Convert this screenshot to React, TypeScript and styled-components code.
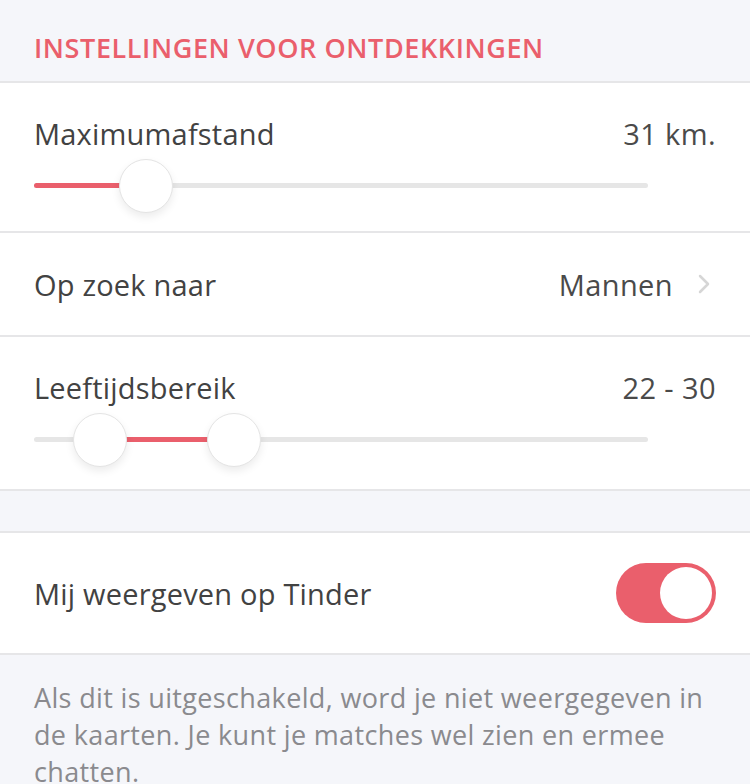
import React from "react";
import styled, { createGlobalStyle } from "styled-components";

const Global = createGlobalStyle`
  html, body { margin: 0; padding: 0; background: #f5f6fa; }
  body { font-family: "Open Sans", Lato, sans-serif; -webkit-font-smoothing: antialiased; }
`;

const ACCENT = "#ea5f6c";
const LINE = "#e6e6e8";

const Page = styled.div`
  width: 750px;
  background: #f5f6fa;
`;

const SectionTitle = styled.div`
  height: 83px;
  box-sizing: border-box;
  padding: 14px 34px 0;
  display: flex;
  align-items: center;
  color: ${ACCENT};
  font-size: 27px;
  font-weight: 600;
  letter-spacing: 0.6px;
  text-transform: uppercase;
  border-bottom: 2px solid ${LINE};
`;

const Group = styled.div`
  background: #fff;
  border-bottom: 2px solid ${LINE};
`;

const Spacer = styled.div`
  height: 42px;
  box-sizing: border-box;
  border-bottom: 2px solid ${LINE};
`;

const Row = styled.div<{ $h: number; $last?: boolean }>`
  height: ${(p) => p.$h}px;
  box-sizing: border-box;
  padding: 0 34px;
  display: flex;
  flex-direction: column;
  justify-content: center;
  border-bottom: ${(p) => (p.$last ? "none" : `2px solid ${LINE}`)};
`;

const SliderRow = styled(Row)`
  justify-content: flex-start;
  padding-top: 32px;
`;

const Line = styled.div`
  display: flex;
  align-items: center;
  justify-content: space-between;
  height: 36px;
`;

const Label = styled.span`
  font-size: 29px;
  color: #424242;
  letter-spacing: 0.2px;
`;

const Value = styled.span`
  font-size: 29px;
  color: #4a4a4a;
  display: flex;
  align-items: center;
  gap: 25px;
  letter-spacing: 0.4px;
`;

const Track = styled.div`
  position: relative;
  width: 614px;
  height: 5px;
  border-radius: 3px;
  background: #e6e6e6;
  margin-top: 32px;
`;

const Fill = styled.div`
  position: absolute;
  top: 0;
  height: 5px;
  background: ${ACCENT};
  border-radius: 3px;
`;

const Thumb = styled.div`
  position: absolute;
  top: -24.5px;
  width: 54px;
  height: 54px;
  margin-left: -27px;
  box-sizing: border-box;
  border-radius: 50%;
  background: #fff;
  border: 1.5px solid #e4e4e4;
  box-shadow: 0 4px 8px rgba(0, 0, 0, 0.08);
`;

const Toggle = styled.div`
  width: 100px;
  height: 60px;
  border-radius: 30px;
  background: ${ACCENT};
  display: flex;
  align-items: center;
  justify-content: flex-end;
  padding: 4px;
  box-sizing: border-box;
`;

const Knob = styled.div`
  width: 52px;
  height: 52px;
  border-radius: 50%;
  background: #fff;
`;

const Note = styled.p`
  margin: 0;
  padding: 24px 34px 0;
  font-size: 27px;
  letter-spacing: 0.35px;
  line-height: 37px;
  color: #8a8a8e;
`;

const ChevronSvg = styled.svg`
  margin-right: 6px;
`;

const Chevron = () => (
  <ChevronSvg width="12" height="20" viewBox="0 0 12 20" fill="none">
    <path d="M2 2l8 8-8 8" stroke="#d6d6d6" strokeWidth="2.5" strokeLinecap="round" strokeLinejoin="round" />
  </ChevronSvg>
);

export default function App() {
  return (
    <Page>
      <Global />
      <SectionTitle>Instellingen voor ontdekkingen</SectionTitle>
      <Group>
        <SliderRow $h={150}>
          <Line>
            <Label>Maximumafstand</Label>
            <Value>31 km.</Value>
          </Line>
          <Track>
            <Fill style={{ left: 0, width: 112 }} />
            <Thumb style={{ left: 112 }} />
          </Track>
        </SliderRow>
        <Row $h={104}>
          <Line>
            <Label>Op zoek naar</Label>
            <Value>
              Mannen
              <Chevron />
            </Value>
          </Line>
        </Row>
        <SliderRow $h={152} $last>
          <Line>
            <Label>Leeftijdsbereik</Label>
            <Value>22 - 30</Value>
          </Line>
          <Track>
            <Fill style={{ left: 66, width: 134 }} />
            <Thumb style={{ left: 66 }} />
            <Thumb style={{ left: 200 }} />
          </Track>
        </SliderRow>
      </Group>
      <Spacer />
      <Group>
        <Row $h={120} $last>
          <Line>
            <Label>Mij weergeven op Tinder</Label>
            <Toggle>
              <Knob />
            </Toggle>
          </Line>
        </Row>
      </Group>
      <Note>
        Als dit is uitgeschakeld, word je niet weergegeven in de kaarten. Je kunt je matches wel zien en ermee chatten.
      </Note>
    </Page>
  );
}
